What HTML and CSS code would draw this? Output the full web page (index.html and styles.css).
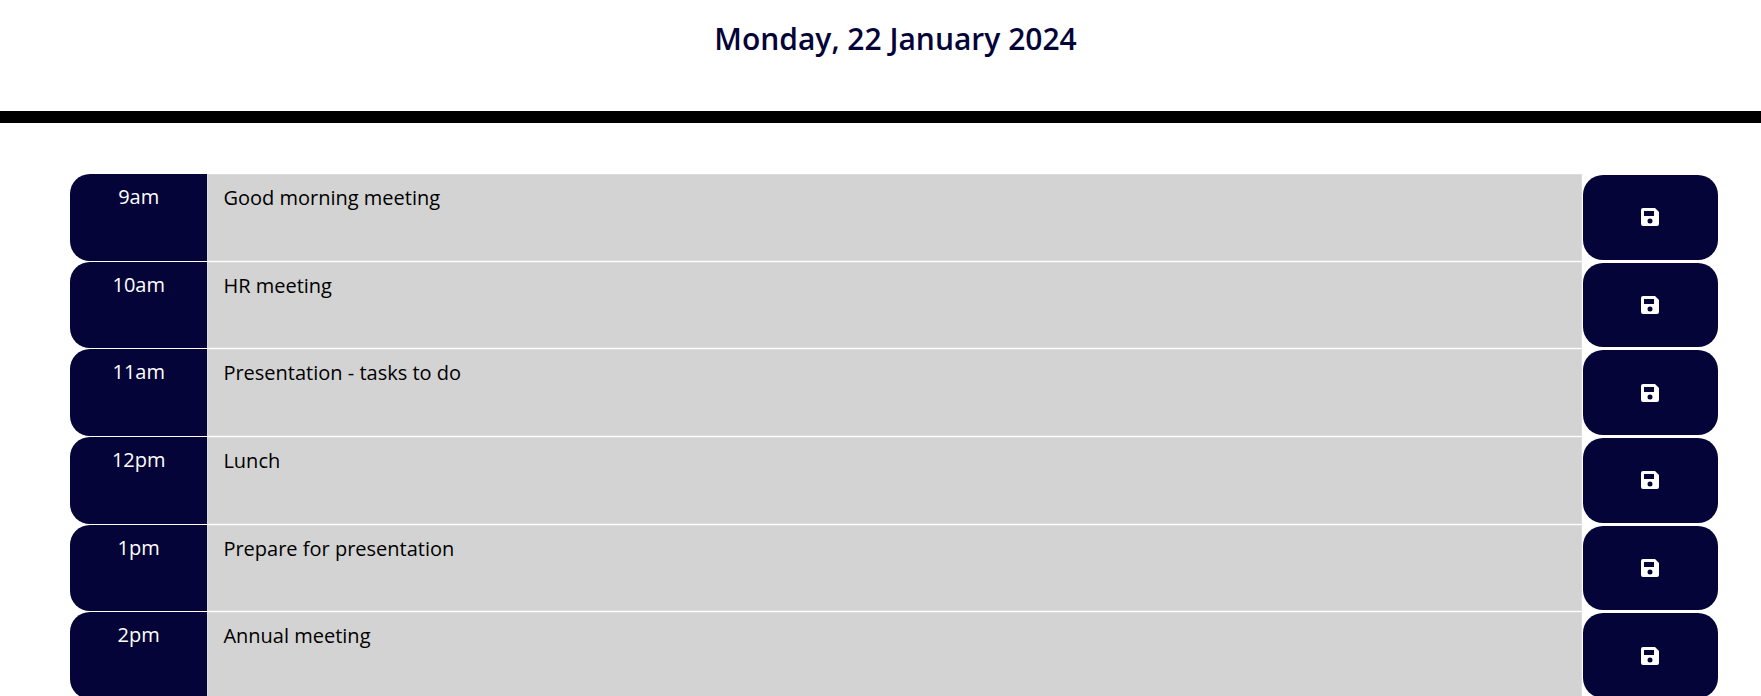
FILE: index.html
```html
<!DOCTYPE html>
<html lang="en">
<head>
<meta charset="utf-8">
<title>Work Day Scheduler</title>
<link rel="stylesheet" href="styles.css">
</head>
<body>
<svg class="sprite" aria-hidden="true">
  <symbol id="save" viewBox="0 0 18 18">
    <path fill-rule="evenodd" d="M2 0H14L18 4V16Q18 18 16 18H2Q0 18 0 16V2Q0 0 2 0ZM3 3V8H13V3ZM9 10.500A2.500 2.500 0 1 0 9 15.500A2.500 2.500 0 1 0 9 10.500Z"/>
  </symbol>
</svg>
<header class="header">
  <h1 class="date">Monday, 22 January 2024</h1>
</header>
<main class="schedule">
  <form class="block">
    <label class="hour" for="h9">9am</label>
    <textarea class="task" id="h9">Good morning meeting</textarea>
    <button class="save" type="button" aria-label="Save 9am"><svg class="icon"><use href="#save"/></svg></button>
  </form>
  <form class="block">
    <label class="hour" for="h10">10am</label>
    <textarea class="task" id="h10">HR meeting</textarea>
    <button class="save" type="button" aria-label="Save 10am"><svg class="icon"><use href="#save"/></svg></button>
  </form>
  <form class="block">
    <label class="hour" for="h11">11am</label>
    <textarea class="task" id="h11">Presentation - tasks to do</textarea>
    <button class="save" type="button" aria-label="Save 11am"><svg class="icon"><use href="#save"/></svg></button>
  </form>
  <form class="block">
    <label class="hour" for="h12">12pm</label>
    <textarea class="task" id="h12">Lunch</textarea>
    <button class="save" type="button" aria-label="Save 12pm"><svg class="icon"><use href="#save"/></svg></button>
  </form>
  <form class="block">
    <label class="hour" for="h13">1pm</label>
    <textarea class="task" id="h13">Prepare for presentation</textarea>
    <button class="save" type="button" aria-label="Save 1pm"><svg class="icon"><use href="#save"/></svg></button>
  </form>
  <form class="block">
    <label class="hour" for="h14">2pm</label>
    <textarea class="task" id="h14">Annual meeting</textarea>
    <button class="save" type="button" aria-label="Save 2pm"><svg class="icon"><use href="#save"/></svg></button>
  </form>
</main>
</body>
</html>
```
FILE: styles.css
```css
* {
  box-sizing: border-box;
}

body {
  margin: 0;
  background: #fff;
  font-family: "Open Sans", sans-serif;
  font-size: 20px;
  line-height: 30px;
}

.sprite {
  display: none;
}

.header {
  padding: 15px 0 48px 30px;
  border-bottom: 12px solid #000;
  text-align: center;
}

.date {
  margin: 0;
  color: #040438;
  font-size: 30px;
  font-weight: 600;
  line-height: 48px;
}

.schedule {
  display: grid;
  grid-auto-rows: 1fr;
  gap: 1px;
  min-height: 525px;
  margin: 51px 42px 0 70px;
}

.block {
  display: grid;
  grid-template-columns: 1fr 10fr 1fr;
}

.hour {
  padding-top: 8px;
  border-radius: 20px 0 0 20px;
  background: #040438;
  color: #fff;
  text-align: center;
}

.task {
  width: 100%;
  height: 100%;
  padding: 8px 15px;
  border: 1px solid #dcdcdc;
  background: #d3d3d3;
  color: #000;
  font: inherit;
  font-weight: 400;
  resize: none;
  outline: none;
  overflow: hidden;
}

.save {
  display: flex;
  align-items: center;
  justify-content: center;
  margin: 1px;
  padding: 0;
  border: 0;
  border-radius: 20px;
  background: #040438;
  color: #fff;
}

.icon {
  width: 18px;
  height: 18px;
  fill: currentColor;
}
```
